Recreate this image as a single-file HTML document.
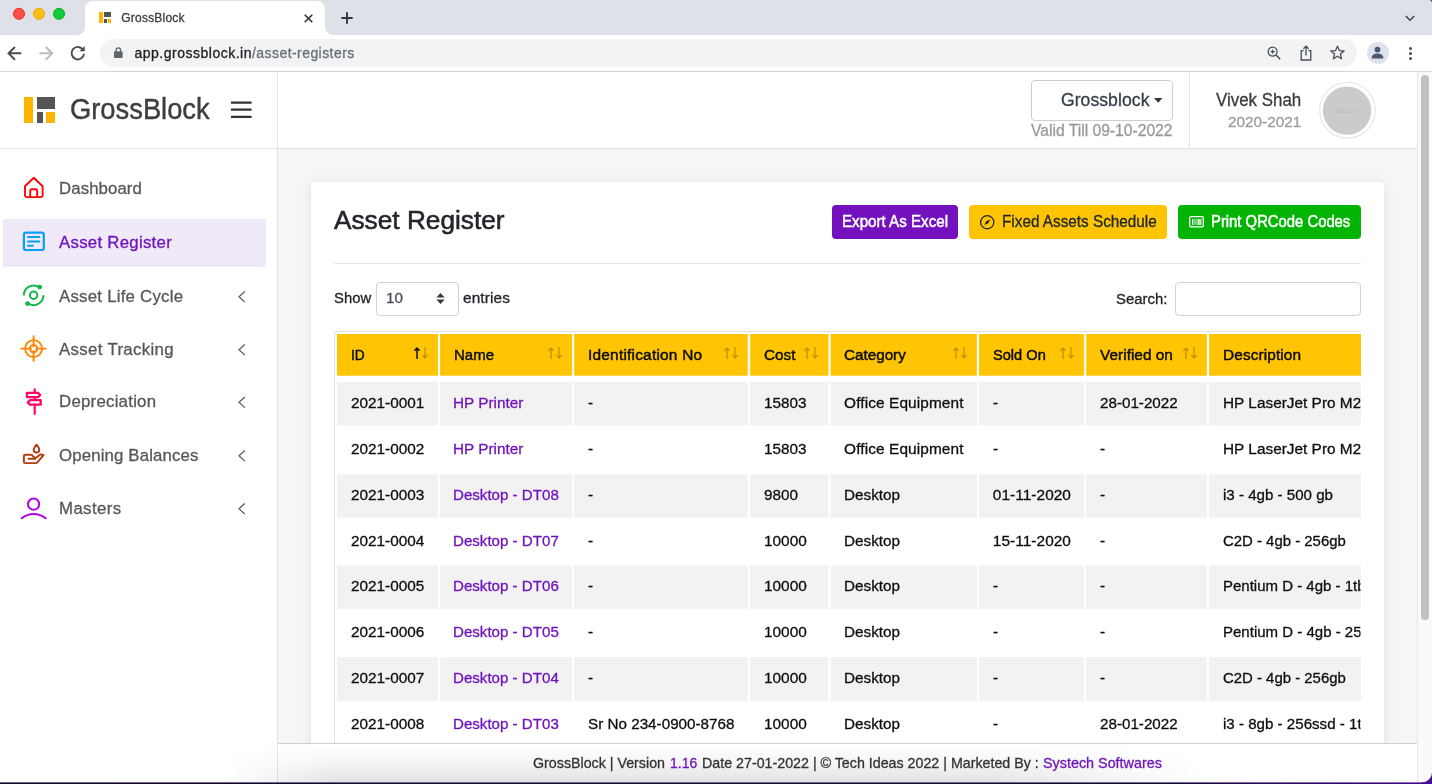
<!DOCTYPE html>
<html lang="en">
<head>
<meta charset="utf-8">
<title>GrossBlock</title>
<style>
html,body{margin:0;padding:0;}
body{width:1432px;height:784px;overflow:hidden;position:relative;background:#f6f6f6;font-family:"Liberation Sans",sans-serif;}
#root{position:absolute;left:0;top:0;width:1432px;height:784px;overflow:hidden;will-change:transform;}
.a{position:absolute;}
.t{position:absolute;white-space:nowrap;line-height:1;}
svg{position:absolute;overflow:visible;}
/* chrome */
#tabstrip{left:0;top:0;width:1432px;height:35px;background:#dfe1e8;}
#tab{left:85px;top:1px;width:240px;height:34px;background:#fff;border-radius:8px 8px 0 0;}
#toolbar{left:0;top:35px;width:1432px;height:36px;background:#fff;}
#chromeline{left:0;top:71px;width:1432px;height:1px;background:#d4d5d8;}
#omni{left:100px;top:39px;width:1257px;height:28px;border-radius:14px;background:#f1f3f4;}
.tl{width:12px;height:12px;border-radius:50%;top:8px;box-sizing:border-box;}
/* app */
#sidebar{left:0;top:72px;width:277px;height:712px;background:#fff;}
#sideline{left:277px;top:72px;width:1px;height:712px;background:#e4e4e4;}
#header{left:278px;top:72px;width:1139px;height:76px;background:#fff;}
#headline{left:0;top:148px;width:1417px;height:1px;background:#e4e4e4;}
#active{left:3px;top:219px;width:263px;height:47.5px;background:#f0e9f8;}
#card{left:311px;top:182px;width:1073px;height:640px;background:#fff;border-radius:4px;box-shadow:0 1px 13px rgba(0,0,0,.085);}
#footer{left:278px;top:743px;width:1139px;height:41px;background:#fff;border-top:1px solid #cfcfcf;box-sizing:border-box;}
#shade{left:225px;top:745px;width:980px;height:37px;background:linear-gradient(to bottom,rgba(0,0,0,0) 0,rgba(0,0,0,.03) 40%,rgba(0,0,0,.11) 100%);-webkit-mask-image:linear-gradient(to right,transparent 0,#000 11%,#000 78%,transparent 100%);mask-image:linear-gradient(to right,transparent 0,#000 11%,#000 78%,transparent 100%);}
#sbtrack{left:1417px;top:72px;width:15px;height:712px;background:#fafafa;border-left:1px solid #e8e8e8;box-sizing:border-box;}
#sbthumb{left:1421px;top:75px;width:8px;height:545px;border-radius:4px;background:#c1c1c1;}
.btn{border-radius:4px;top:205px;height:34px;}
.th{top:334px;height:42px;background:#ffc403;}
.td{background:#f2f2f2;height:43.6px;}
.box{border:1px solid #ced4da;border-radius:4px;box-sizing:border-box;background:#fff;}
</style>
</head>
<body>
<div id="root">
<!-- ===== browser chrome ===== -->
<div class="a" id="tabstrip"></div>
<div class="a" id="tab"></div>
<svg style="left:77px;top:27px" width="8" height="8"><path d="M8 0V8H0A8 8 0 0 0 8 0Z" fill="#fff"/></svg>
<svg style="left:325px;top:27px" width="8" height="8"><path d="M0 0V8H8A8 8 0 0 1 0 0Z" fill="#fff"/></svg>
<svg style="left:10px;top:5px" width="60" height="18" viewBox="10 5 60 18"><circle cx="19" cy="13.8" r="5.55" fill="#ff4f48" stroke="#ee2412" stroke-width=".9"/><circle cx="39" cy="13.8" r="5.55" fill="#ffbf12" stroke="#e5a000" stroke-width=".9"/><circle cx="59" cy="13.8" r="5.55" fill="#12cc3a" stroke="#00aa1c" stroke-width=".9"/></svg>
<div class="a" id="toolbar"></div>
<div class="a" id="chromeline"></div>
<div class="a" id="omni"></div>
<!-- favicon -->
<div class="a" style="left:98.8px;top:12.3px;width:4.1px;height:11.1px;background:#ffb400"></div>
<div class="a" style="left:104px;top:12.3px;width:7.4px;height:5.2px;background:#555"></div>
<div class="a" style="left:104px;top:18.6px;width:2.8px;height:4.8px;background:#555"></div>
<div class="a" style="left:108px;top:18.6px;width:3.4px;height:4.8px;background:#ffb400"></div>
<!-- tab close / new tab / chevron -->
<svg style="left:304px;top:13.5px" width="9" height="9" viewBox="0 0 9 9"><path d="M.7 .7L8.3 8.3M8.3 .7L.7 8.3" stroke="#33363a" stroke-width="1.6"/></svg>
<svg style="left:340.8px;top:12.1px" width="12" height="12" viewBox="0 0 12 12"><path d="M6 .3V11.7M.3 6H11.7" stroke="#33363a" stroke-width="1.9"/></svg>
<svg style="left:1405px;top:14.5px" width="10" height="7" viewBox="0 0 10 7"><path d="M.8 1L5 5.2L9.2 1" fill="none" stroke="#3c4043" stroke-width="1.5"/></svg>
<!-- back / forward / reload -->
<svg style="left:6.5px;top:45.7px" width="14.7" height="14.7" viewBox="0 0 14 14"><path d="M13.6 7H1.8M7.6 .9L1.5 7L7.6 13.1" fill="none" stroke="#4a4d51" stroke-width="1.9"/></svg>
<svg style="left:38.7px;top:45.7px" width="14.7" height="14.7" viewBox="0 0 14 14"><path d="M.4 7H12.2M6.4 .9L12.5 7L6.4 13.1" fill="none" stroke="#b9bbbe" stroke-width="1.9"/></svg>
<svg style="left:70.2px;top:44.8px" width="15.6" height="15.6" viewBox="0 0 15 15"><path d="M12.6 4.6A6 6 0 1 0 13.5 8.4" fill="none" stroke="#4a4d51" stroke-width="1.9"/><path d="M14.2 .9V6H9.1Z" fill="#4a4d51"/></svg>
<!-- lock -->
<svg style="left:113.8px;top:47px" width="8.6" height="11" viewBox="0 0 8.6 11"><rect x="0" y="4.2" width="8.6" height="6.8" rx="1" fill="#5f6368"/><path d="M2 4.6V3.2A2.3 2.3 0 0 1 6.6 3.2V4.6" fill="none" stroke="#5f6368" stroke-width="1.3"/></svg>
<!-- zoom -->
<svg style="left:1266.5px;top:45.5px" width="14" height="14" viewBox="0 0 14 14"><circle cx="5.6" cy="5.6" r="4.5" fill="none" stroke="#4a4d51" stroke-width="1.3"/><path d="M9 9L13.2 13.2" stroke="#4a4d51" stroke-width="1.5"/><path d="M5.6 3.4V7.8M3.4 5.6H7.8" stroke="#4a4d51" stroke-width="1.1"/></svg>
<!-- share -->
<svg style="left:1300px;top:44.5px" width="12" height="16" viewBox="0 0 12 16"><path d="M3.6 5.6H1.2V15H10.8V5.6H8.4" fill="none" stroke="#4a4d51" stroke-width="1.3"/><path d="M6 10.4V1.4M3.4 3.8L6 1.2L8.6 3.8" fill="none" stroke="#4a4d51" stroke-width="1.3"/></svg>
<!-- star -->
<svg style="left:1330px;top:45px" width="15" height="15" viewBox="0 0 15 15"><path d="M7.5 1.2L9.4 5.6L14.1 6L10.5 9.1L11.6 13.8L7.5 11.3L3.4 13.8L4.5 9.1L.9 6L5.6 5.6Z" fill="none" stroke="#4a4d51" stroke-width="1.3" stroke-linejoin="round"/></svg>
<!-- profile -->
<div class="a" style="left:1366.5px;top:42px;width:22px;height:22px;border-radius:50%;background:#dfe2e9"></div>
<svg style="left:1371px;top:46px" width="13" height="13" viewBox="0 0 13 13"><circle cx="6.5" cy="3.6" r="2.9" fill="#4c5871"/><path d="M.6 12.6C.6 8.6 3.6 7.6 6.5 7.6S12.4 8.6 12.4 12.6Z" fill="#4c5871"/></svg>
<!-- menu dots -->
<svg style="left:1408.5px;top:47px" width="3" height="14" viewBox="0 0 3 14"><circle cx="1.5" cy="1.6" r="1.5" fill="#4a4d51"/><circle cx="1.5" cy="6.5" r="1.5" fill="#4a4d51"/><circle cx="1.5" cy="11.4" r="1.5" fill="#4a4d51"/></svg>

<!-- ===== app ===== -->
<div class="a" id="header"></div>
<div class="a" id="sidebar"></div>
<div class="a" id="sideline"></div>
<div class="a" id="active"></div>
<div class="a" id="card"></div>
<div class="a btn" style="left:832px;width:125.6px;background:#7211bd"></div>
<div class="a btn" style="left:968.7px;width:197.9px;background:#ffc403"></div>
<div class="a btn" style="left:1178.1px;width:182.9px;background:#04b404"></div>
<svg style="left:980px;top:215.1px" width="14.5" height="14.5" viewBox="0 0 14.5 14.5"><circle cx="7.25" cy="7.25" r="6.6" fill="none" stroke="#1d2530" stroke-width="1.25"/><path d="M10.1 4.4L8.3 8.3L4.4 10.1L6.2 6.2Z" fill="#1d2530"/></svg>
<svg style="left:1189px;top:216.2px" width="15" height="11.6" viewBox="0 0 15 11.6"><rect x=".65" y=".65" width="13.7" height="10.3" rx="1.4" fill="none" stroke="#fff" stroke-width="1.3"/><path d="M3.6 2.9V8.9M10.9 2.9V8.9" stroke="#fff" stroke-width="1.2"/><path d="M5.1 2.9V8.9M6.3 2.9V8.9" stroke="#fff" stroke-width=".7" opacity=".8"/><path d="M7.9 2.9V8.9" stroke="#fff" stroke-width="1" opacity=".7"/><path d="M9.4 2.9V8.9" stroke="#fff" stroke-width="1.1"/><path d="M12 2.9V8.9" stroke="#fff" stroke-width=".8"/></svg>
<div class="a" style="left:334px;top:263px;width:1027px;height:1px;background:#e6e6e6"></div>
<div class="a box" style="left:376px;top:282px;width:82.5px;height:33.6px"></div>
<svg style="left:436px;top:293px" width="9" height="11" viewBox="0 0 9 11"><path d="M4.5 0L8.6 4.4H.4Z M4.5 11L8.6 6.6H.4Z" fill="#343a40"/></svg>
<div class="a box" style="left:1175px;top:282px;width:186px;height:33.6px"></div>
<div class="a" style="left:334px;top:331px;width:1027px;height:1px;background:#dee2e6"></div>
<div class="a" style="left:334px;top:331px;width:1px;height:420px;background:#dee2e6"></div>
<svg style="left:0;top:0" width="1361" height="784" viewBox="0 0 1361 784"><rect x="337" y="334" width="101.0" height="41.7" fill="#ffc403"/><rect x="440.1" y="334" width="131.9" height="41.7" fill="#ffc403"/><rect x="574.2" y="334" width="173.5" height="41.7" fill="#ffc403"/><rect x="750.2" y="334" width="78.2" height="41.7" fill="#ffc403"/><rect x="830.7" y="334" width="146.1" height="41.7" fill="#ffc403"/><rect x="979.1" y="334" width="104.8" height="41.7" fill="#ffc403"/><rect x="1086.2" y="334" width="120.6" height="41.7" fill="#ffc403"/><rect x="1209.1" y="334" width="151.9" height="41.7" fill="#ffc403"/><rect x="337" y="382.00" width="101.0" height="43.5" fill="#f2f2f2"/><rect x="440.1" y="382.00" width="131.9" height="43.5" fill="#f2f2f2"/><rect x="574.2" y="382.00" width="173.5" height="43.5" fill="#f2f2f2"/><rect x="750.2" y="382.00" width="78.2" height="43.5" fill="#f2f2f2"/><rect x="830.7" y="382.00" width="146.1" height="43.5" fill="#f2f2f2"/><rect x="979.1" y="382.00" width="104.8" height="43.5" fill="#f2f2f2"/><rect x="1086.2" y="382.00" width="120.6" height="43.5" fill="#f2f2f2"/><rect x="1209.1" y="382.00" width="151.9" height="43.5" fill="#f2f2f2"/><rect x="337" y="474.20" width="101.0" height="43.6" fill="#f2f2f2"/><rect x="440.1" y="474.20" width="131.9" height="43.6" fill="#f2f2f2"/><rect x="574.2" y="474.20" width="173.5" height="43.6" fill="#f2f2f2"/><rect x="750.2" y="474.20" width="78.2" height="43.6" fill="#f2f2f2"/><rect x="830.7" y="474.20" width="146.1" height="43.6" fill="#f2f2f2"/><rect x="979.1" y="474.20" width="104.8" height="43.6" fill="#f2f2f2"/><rect x="1086.2" y="474.20" width="120.6" height="43.6" fill="#f2f2f2"/><rect x="1209.1" y="474.20" width="151.9" height="43.6" fill="#f2f2f2"/><rect x="337" y="565.20" width="101.0" height="43.6" fill="#f2f2f2"/><rect x="440.1" y="565.20" width="131.9" height="43.6" fill="#f2f2f2"/><rect x="574.2" y="565.20" width="173.5" height="43.6" fill="#f2f2f2"/><rect x="750.2" y="565.20" width="78.2" height="43.6" fill="#f2f2f2"/><rect x="830.7" y="565.20" width="146.1" height="43.6" fill="#f2f2f2"/><rect x="979.1" y="565.20" width="104.8" height="43.6" fill="#f2f2f2"/><rect x="1086.2" y="565.20" width="120.6" height="43.6" fill="#f2f2f2"/><rect x="1209.1" y="565.20" width="151.9" height="43.6" fill="#f2f2f2"/><rect x="337" y="657.20" width="101.0" height="43.6" fill="#f2f2f2"/><rect x="440.1" y="657.20" width="131.9" height="43.6" fill="#f2f2f2"/><rect x="574.2" y="657.20" width="173.5" height="43.6" fill="#f2f2f2"/><rect x="750.2" y="657.20" width="78.2" height="43.6" fill="#f2f2f2"/><rect x="830.7" y="657.20" width="146.1" height="43.6" fill="#f2f2f2"/><rect x="979.1" y="657.20" width="104.8" height="43.6" fill="#f2f2f2"/><rect x="1086.2" y="657.20" width="120.6" height="43.6" fill="#f2f2f2"/><rect x="1209.1" y="657.20" width="151.9" height="43.6" fill="#f2f2f2"/></svg>
<svg style="left:413.9px;top:347px" width="15" height="12" viewBox="0 0 15 12"><path d="M3 12V1.2M.4 3.8L3 1L5.6 3.8" fill="none" stroke="#111" stroke-width="1.5"/><path d="M11 0V10.8M8.4 8.2L11 11L13.6 8.2" fill="none" stroke="#b8890a" stroke-width="1.1"/></svg>
<svg style="left:547.9px;top:347px" width="15" height="12" viewBox="0 0 15 12"><path d="M3 12V1.2M.4 3.8L3 1L5.6 3.8" fill="none" stroke="#b8890a" stroke-width="1.1"/><path d="M11 0V10.8M8.4 8.2L11 11L13.6 8.2" fill="none" stroke="#b8890a" stroke-width="1.1"/></svg>
<svg style="left:723.6px;top:347px" width="15" height="12" viewBox="0 0 15 12"><path d="M3 12V1.2M.4 3.8L3 1L5.6 3.8" fill="none" stroke="#b8890a" stroke-width="1.1"/><path d="M11 0V10.8M8.4 8.2L11 11L13.6 8.2" fill="none" stroke="#b8890a" stroke-width="1.1"/></svg>
<svg style="left:804.3px;top:347px" width="15" height="12" viewBox="0 0 15 12"><path d="M3 12V1.2M.4 3.8L3 1L5.6 3.8" fill="none" stroke="#b8890a" stroke-width="1.1"/><path d="M11 0V10.8M8.4 8.2L11 11L13.6 8.2" fill="none" stroke="#b8890a" stroke-width="1.1"/></svg>
<svg style="left:952.7px;top:347px" width="15" height="12" viewBox="0 0 15 12"><path d="M3 12V1.2M.4 3.8L3 1L5.6 3.8" fill="none" stroke="#b8890a" stroke-width="1.1"/><path d="M11 0V10.8M8.4 8.2L11 11L13.6 8.2" fill="none" stroke="#b8890a" stroke-width="1.1"/></svg>
<svg style="left:1059.8px;top:347px" width="15" height="12" viewBox="0 0 15 12"><path d="M3 12V1.2M.4 3.8L3 1L5.6 3.8" fill="none" stroke="#b8890a" stroke-width="1.1"/><path d="M11 0V10.8M8.4 8.2L11 11L13.6 8.2" fill="none" stroke="#b8890a" stroke-width="1.1"/></svg>
<svg style="left:1182.7px;top:347px" width="15" height="12" viewBox="0 0 15 12"><path d="M3 12V1.2M.4 3.8L3 1L5.6 3.8" fill="none" stroke="#b8890a" stroke-width="1.1"/><path d="M11 0V10.8M8.4 8.2L11 11L13.6 8.2" fill="none" stroke="#b8890a" stroke-width="1.1"/></svg>

<div class="a" id="footer"></div>
<div class="a" id="shade"></div>
<div class="a" id="headline"></div>
<!-- logo -->
<div class="a" style="left:24.3px;top:96.7px;width:8.7px;height:26.3px;background:#ffb400"></div>
<div class="a" style="left:36.5px;top:96.7px;width:18.2px;height:12.2px;background:#555"></div>
<div class="a" style="left:36.5px;top:111.5px;width:6.5px;height:11.5px;background:#555"></div>
<div class="a" style="left:46.2px;top:111.5px;width:8.5px;height:11.5px;background:#ffb400"></div>
<!-- hamburger -->
<svg style="left:231px;top:100px" width="21" height="19" viewBox="0 0 21 19"><path d="M0 2.6H20.6M0 9.7H20.6M0 16.8H20.6" stroke="#333" stroke-width="2.3"/></svg>
<!-- company dropdown -->
<div class="a" style="left:1031px;top:80px;width:141.5px;height:40.5px;border:1px solid #c6cfdc;border-radius:4px;box-sizing:border-box;background:#fff"></div>
<svg style="left:1154.3px;top:98px" width="8.4" height="5" viewBox="0 0 8.4 5"><path d="M0 0H8.4L4.2 4.7Z" fill="#2d3742"/></svg>
<div class="a" style="left:1189px;top:72px;width:1px;height:76px;background:#e4e4e4"></div>
<!-- avatar -->
<svg style="left:1310px;top:76px" width="76" height="70" viewBox="1310 76 76 70"><circle cx="1347.5" cy="110.3" r="27.8" fill="#fff" stroke="#e7e7e7" stroke-width="1.2"/><circle cx="1347.1" cy="110.6" r="24.2" fill="#cbcbcb"/></svg>

<svg style="left:0;top:150px" width="277" height="400" viewBox="0 150 277 400" fill="none" stroke-linecap="round" stroke-linejoin="round">
<!-- dashboard (home) -->
<g stroke="#ff0505" stroke-width="1.9">
<path d="M25 186.3L33.8 177.8L42.6 186.3V195.6A1.5 1.5 0 0 1 41.1 197.1H26.5A1.5 1.5 0 0 1 25 195.6Z"/>
<path d="M30.2 196.8V190.8A1.5 1.5 0 0 1 31.7 189.3H35.7A1.5 1.5 0 0 1 37.2 190.8V196.8"/>
</g>
<!-- asset register -->
<g stroke="#06a0fb">
<rect x="23.9" y="232.6" width="19.9" height="17.4" rx="2" stroke-width="2.2"/>
<path d="M28 237H39.2M28 241.4H39.2M28 245.8H32.9" stroke-width="2"/>
</g>
<!-- asset life cycle -->
<g stroke="#10b646" stroke-width="2">
<circle cx="33.6" cy="295.3" r="3.7"/>
<path d="M23.9 294.6A9.8 9.8 0 0 1 39.4 287.4"/>
<path d="M43.4 296A9.8 9.8 0 0 1 27.9 303.3"/>
<circle cx="39.7" cy="287.1" r="2.4" fill="#10b646" stroke="none"/>
<circle cx="27.6" cy="303.6" r="2.4" fill="#10b646" stroke="none"/>
</g>
<!-- asset tracking -->
<g stroke="#ff8600" stroke-width="1.9">
<circle cx="33.6" cy="348.6" r="8.5"/>
<circle cx="33.6" cy="348.6" r="3.7"/>
<path d="M33.6 336.3V346.2M33.6 351V360.9M21.3 348.6H31.2M36 348.6H45.9"/>
</g>
<!-- depreciation (signpost) -->
<g stroke="#ff0568" stroke-width="2.3">
<path d="M34.7 389.3V392.6M34.7 397.4V400M34.7 404.8V413.8" stroke-width="2.2"/>
<path d="M27 392.8H38L40.1 395L38 397.2H27Z"/>
<path d="M40.7 400.2H29.9L27.8 402.4L29.9 404.7H40.7Z"/>
</g>
<!-- opening balances (hand + drop) -->
<g stroke="#b23c0e" stroke-width="1.9">
<path d="M36.5 444.7C38.2 446.7 39.3 448.4 39.3 449.7A2.8 2.8 0 0 1 33.7 449.7C33.7 448.4 34.8 446.7 36.5 444.7Z"/>
<path d="M25.1 454.7H30.4C32.6 454.7 33.5 456.6 35.1 458.5L39.6 454.9C40.6 454.2 41.6 454.2 43.6 455.2L37.3 462.4C36.9 462.9 36.4 463.1 35.8 463.1H25.1A1.2 1.2 0 0 1 23.9 461.9V455.9A1.2 1.2 0 0 1 25.1 454.7Z"/>
<path d="M28.6 458.8H35"/>
</g>
<!-- masters (user) -->
<g stroke="#b000f0" stroke-width="2">
<circle cx="33.6" cy="504.2" r="5.6"/>
<path d="M21.8 518.3A18.6 18.6 0 0 1 45.6 518.3"/>
</g>
<!-- chevrons -->
<g stroke="#555" stroke-width="1.2" stroke-linecap="butt" stroke-linejoin="miter">
<path d="M244.8 291.5L239 296.8L244.8 302.1"/>
<path d="M244.8 344.5L239 349.8L244.8 355.1"/>
<path d="M244.8 397L239 402.3L244.8 407.6"/>
<path d="M244.8 450.5L239 455.8L244.8 461.1"/>
<path d="M244.8 503.5L239 508.8L244.8 514.1"/>
</g>
</svg>

<div class="a" id="sbtrack"></div>
<div class="a" id="sbthumb"></div>
<span class="t" style="left:121.30px;top:12.00px;font-size:12px;color:#3c4043;letter-spacing:0.214px;-webkit-text-stroke:0.3px #3c4043;">GrossBlock</span>
<span class="t" style="left:134.50px;top:45.80px;font-size:14px;color:#202124;letter-spacing:0.503px;-webkit-text-stroke:0.3px #202124;">app.grossblock.in</span>
<span class="t" style="left:252.00px;top:45.80px;font-size:14px;color:#6b6f74;letter-spacing:0.437px;-webkit-text-stroke:0.3px #6b6f74;">/asset-registers</span>
<span class="t" style="left:69.90px;top:95.00px;font-size:29.2px;color:#3d3d3d;transform:scaleX(0.9362);transform-origin:0 0;-webkit-text-stroke:0.4px #3d3d3d;">GrossBlock</span>
<span class="t" style="left:59.00px;top:181.00px;font-size:16.8px;color:#585858;letter-spacing:0.099px;-webkit-text-stroke:0.3px #585858;">Dashboard</span>
<span class="t" style="left:59.00px;top:235.00px;font-size:16.8px;color:#7014bd;letter-spacing:0.277px;-webkit-text-stroke:0.3px #7014bd;">Asset Register</span>
<span class="t" style="left:59.00px;top:289.00px;font-size:16.8px;color:#585858;letter-spacing:0.249px;-webkit-text-stroke:0.3px #585858;">Asset Life Cycle</span>
<span class="t" style="left:59.00px;top:342.00px;font-size:16.8px;color:#585858;letter-spacing:0.353px;-webkit-text-stroke:0.3px #585858;">Asset Tracking</span>
<span class="t" style="left:59.00px;top:394.00px;font-size:16.8px;color:#585858;letter-spacing:0.257px;-webkit-text-stroke:0.3px #585858;">Depreciation</span>
<span class="t" style="left:59.00px;top:448.00px;font-size:16.8px;color:#585858;letter-spacing:0.153px;-webkit-text-stroke:0.3px #585858;">Opening Balances</span>
<span class="t" style="left:59.00px;top:501.00px;font-size:16.8px;color:#585858;letter-spacing:0.402px;-webkit-text-stroke:0.3px #585858;">Masters</span>
<span class="t" style="left:1060.90px;top:92.00px;font-size:17.6px;color:#323e4c;letter-spacing:0.060px;-webkit-text-stroke:0.3px #323e4c;">Grossblock</span>
<span class="t" style="left:1031.00px;top:123.00px;font-size:15.7px;color:#999;transform:scaleX(0.9975);transform-origin:0 0;-webkit-text-stroke:0.3px #999;">Valid Till 09-10-2022</span>
<span class="t" style="left:1216.20px;top:92.00px;font-size:17.6px;color:#3a3a3a;transform:scaleX(0.9607);transform-origin:0 0;-webkit-text-stroke:0.3px #3a3a3a;">Vivek Shah</span>
<span class="t" style="left:1227.70px;top:114.00px;font-size:15.4px;color:#9b9b9b;transform:scaleX(0.9958);transform-origin:0 0;-webkit-text-stroke:0.3px #9b9b9b;">2020-2021</span>
<span class="t" style="left:1337.20px;top:108.70px;font-size:5.2px;color:#b4b4b4;transform:scaleX(0.8312);transform-origin:0 0;">110 x 110</span>
<span class="t" style="left:334.40px;top:207.40px;font-size:26.6px;color:#212529;transform:scaleX(0.9865);transform-origin:0 0;-webkit-text-stroke:0.55px #212529;">Asset Register</span>
<span class="t" style="left:841.70px;top:213.00px;font-size:16.5px;color:#fff;transform:scaleX(0.9173);transform-origin:0 0;-webkit-text-stroke:0.5px #fff;">Export As Excel</span>
<span class="t" style="left:1001.60px;top:213.00px;font-size:16.5px;color:#1d2530;transform:scaleX(0.9267);transform-origin:0 0;-webkit-text-stroke:0.3px #1d2530;">Fixed Assets Schedule</span>
<span class="t" style="left:1211.00px;top:213.00px;font-size:16.5px;color:#fff;transform:scaleX(0.8987);transform-origin:0 0;-webkit-text-stroke:0.5px #fff;">Print QRCode Codes</span>
<span class="t" style="left:334.40px;top:290.00px;font-size:15.4px;color:#212529;transform:scaleX(0.9662);transform-origin:0 0;-webkit-text-stroke:0.3px #212529;">Show</span>
<span class="t" style="left:386.00px;top:290.00px;font-size:15.4px;color:#495057;transform:scaleX(0.9869);transform-origin:0 0;-webkit-text-stroke:0.3px #495057;">10</span>
<span class="t" style="left:463.00px;top:290.00px;font-size:15.4px;color:#212529;letter-spacing:0.114px;-webkit-text-stroke:0.3px #212529;">entries</span>
<span class="t" style="left:1115.70px;top:291.00px;font-size:15.4px;color:#212529;transform:scaleX(0.9671);transform-origin:0 0;-webkit-text-stroke:0.3px #212529;">Search:</span>
<span class="t" style="left:350.90px;top:347.00px;font-size:15.4px;color:#0c0c0c;transform:scaleX(0.8892);transform-origin:0 0;-webkit-text-stroke:0.45px #0c0c0c;">ID</span>
<span class="t" style="left:453.60px;top:347.00px;font-size:15.4px;color:#0c0c0c;transform:scaleX(0.9741);transform-origin:0 0;-webkit-text-stroke:0.45px #0c0c0c;">Name</span>
<span class="t" style="left:588.00px;top:347.00px;font-size:15.4px;color:#0c0c0c;letter-spacing:0.231px;-webkit-text-stroke:0.45px #0c0c0c;">Identification No</span>
<span class="t" style="left:763.90px;top:347.00px;font-size:15.4px;color:#0c0c0c;transform:scaleX(0.9919);transform-origin:0 0;-webkit-text-stroke:0.45px #0c0c0c;">Cost</span>
<span class="t" style="left:844.10px;top:347.00px;font-size:15.4px;color:#0c0c0c;transform:scaleX(0.9895);transform-origin:0 0;-webkit-text-stroke:0.45px #0c0c0c;">Category</span>
<span class="t" style="left:993.00px;top:347.00px;font-size:15.4px;color:#0c0c0c;transform:scaleX(0.9492);transform-origin:0 0;-webkit-text-stroke:0.45px #0c0c0c;">Sold On</span>
<span class="t" style="left:1100.10px;top:347.00px;font-size:15.4px;color:#0c0c0c;letter-spacing:0.006px;-webkit-text-stroke:0.45px #0c0c0c;">Verified on</span>
<span class="t" style="left:1223.00px;top:347.00px;font-size:15.4px;color:#0c0c0c;letter-spacing:0.101px;-webkit-text-stroke:0.45px #0c0c0c;">Description</span>
<span class="t" style="left:350.90px;top:395.00px;font-size:15.4px;color:#0e0e0e;transform:scaleX(0.9958);transform-origin:0 0;-webkit-text-stroke:0.3px #0e0e0e;">2021-0001</span>
<span class="t" style="left:453.10px;top:395.00px;font-size:15.4px;color:#7014bd;transform:scaleX(0.9941);transform-origin:0 0;-webkit-text-stroke:0.3px #7014bd;">HP Printer</span>
<span class="t" style="left:587.60px;top:395.00px;font-size:15.4px;color:#0e0e0e;transform:scaleX(0.9921);transform-origin:0 0;-webkit-text-stroke:0.3px #0e0e0e;">-</span>
<span class="t" style="left:763.90px;top:395.00px;font-size:15.4px;color:#0e0e0e;transform:scaleX(0.9927);transform-origin:0 0;-webkit-text-stroke:0.3px #0e0e0e;">15803</span>
<span class="t" style="left:844.10px;top:395.00px;font-size:15.4px;color:#0e0e0e;letter-spacing:0.107px;-webkit-text-stroke:0.3px #0e0e0e;">Office Equipment</span>
<span class="t" style="left:992.80px;top:395.00px;font-size:15.4px;color:#0e0e0e;transform:scaleX(0.9921);transform-origin:0 0;-webkit-text-stroke:0.3px #0e0e0e;">-</span>
<span class="t" style="left:1100.10px;top:395.00px;font-size:15.4px;color:#0e0e0e;transform:scaleX(0.9869);transform-origin:0 0;-webkit-text-stroke:0.3px #0e0e0e;">28-01-2022</span>
<span class="t" style="left:1223.40px;top:395.00px;font-size:15.4px;color:#0e0e0e;transform:scaleX(0.9993);transform-origin:0 0;-webkit-text-stroke:0.3px #0e0e0e;clip-path:inset(-6px calc(100% - 137.7px) -6px 0);">HP LaserJet Pro M203dn</span>
<span class="t" style="left:350.90px;top:441.00px;font-size:15.4px;color:#0e0e0e;transform:scaleX(0.9958);transform-origin:0 0;-webkit-text-stroke:0.3px #0e0e0e;">2021-0002</span>
<span class="t" style="left:453.10px;top:441.00px;font-size:15.4px;color:#7014bd;transform:scaleX(0.9941);transform-origin:0 0;-webkit-text-stroke:0.3px #7014bd;">HP Printer</span>
<span class="t" style="left:587.60px;top:441.00px;font-size:15.4px;color:#0e0e0e;transform:scaleX(0.9921);transform-origin:0 0;-webkit-text-stroke:0.3px #0e0e0e;">-</span>
<span class="t" style="left:763.90px;top:441.00px;font-size:15.4px;color:#0e0e0e;transform:scaleX(0.9927);transform-origin:0 0;-webkit-text-stroke:0.3px #0e0e0e;">15803</span>
<span class="t" style="left:844.10px;top:441.00px;font-size:15.4px;color:#0e0e0e;letter-spacing:0.107px;-webkit-text-stroke:0.3px #0e0e0e;">Office Equipment</span>
<span class="t" style="left:992.80px;top:441.00px;font-size:15.4px;color:#0e0e0e;transform:scaleX(0.9921);transform-origin:0 0;-webkit-text-stroke:0.3px #0e0e0e;">-</span>
<span class="t" style="left:1100.10px;top:441.00px;font-size:15.4px;color:#0e0e0e;transform:scaleX(0.9921);transform-origin:0 0;-webkit-text-stroke:0.3px #0e0e0e;">-</span>
<span class="t" style="left:1223.40px;top:441.00px;font-size:15.4px;color:#0e0e0e;transform:scaleX(0.9993);transform-origin:0 0;-webkit-text-stroke:0.3px #0e0e0e;clip-path:inset(-6px calc(100% - 137.7px) -6px 0);">HP LaserJet Pro M203dn</span>
<span class="t" style="left:350.90px;top:487.00px;font-size:15.4px;color:#0e0e0e;transform:scaleX(0.9958);transform-origin:0 0;-webkit-text-stroke:0.3px #0e0e0e;">2021-0003</span>
<span class="t" style="left:453.10px;top:487.00px;font-size:15.4px;color:#7014bd;transform:scaleX(0.9816);transform-origin:0 0;-webkit-text-stroke:0.3px #7014bd;">Desktop - DT08</span>
<span class="t" style="left:587.60px;top:487.00px;font-size:15.4px;color:#0e0e0e;transform:scaleX(0.9921);transform-origin:0 0;-webkit-text-stroke:0.3px #0e0e0e;">-</span>
<span class="t" style="left:763.90px;top:487.00px;font-size:15.4px;color:#0e0e0e;transform:scaleX(0.9927);transform-origin:0 0;-webkit-text-stroke:0.3px #0e0e0e;">9800</span>
<span class="t" style="left:844.10px;top:487.00px;font-size:15.4px;color:#0e0e0e;transform:scaleX(0.9935);transform-origin:0 0;-webkit-text-stroke:0.3px #0e0e0e;">Desktop</span>
<span class="t" style="left:992.80px;top:487.00px;font-size:15.4px;color:#0e0e0e;letter-spacing:0.061px;-webkit-text-stroke:0.3px #0e0e0e;">01-11-2020</span>
<span class="t" style="left:1100.10px;top:487.00px;font-size:15.4px;color:#0e0e0e;transform:scaleX(0.9921);transform-origin:0 0;-webkit-text-stroke:0.3px #0e0e0e;">-</span>
<span class="t" style="left:1223.40px;top:487.00px;font-size:15.4px;color:#0e0e0e;transform:scaleX(0.9813);transform-origin:0 0;-webkit-text-stroke:0.3px #0e0e0e;clip-path:inset(-6px calc(100% - 140.2px) -6px 0);">i3 - 4gb - 500 gb</span>
<span class="t" style="left:350.90px;top:533.00px;font-size:15.4px;color:#0e0e0e;transform:scaleX(0.9958);transform-origin:0 0;-webkit-text-stroke:0.3px #0e0e0e;">2021-0004</span>
<span class="t" style="left:453.10px;top:533.00px;font-size:15.4px;color:#7014bd;transform:scaleX(0.9816);transform-origin:0 0;-webkit-text-stroke:0.3px #7014bd;">Desktop - DT07</span>
<span class="t" style="left:587.60px;top:533.00px;font-size:15.4px;color:#0e0e0e;transform:scaleX(0.9921);transform-origin:0 0;-webkit-text-stroke:0.3px #0e0e0e;">-</span>
<span class="t" style="left:763.90px;top:533.00px;font-size:15.4px;color:#0e0e0e;letter-spacing:0.037px;-webkit-text-stroke:0.3px #0e0e0e;">10000</span>
<span class="t" style="left:844.10px;top:533.00px;font-size:15.4px;color:#0e0e0e;transform:scaleX(0.9935);transform-origin:0 0;-webkit-text-stroke:0.3px #0e0e0e;">Desktop</span>
<span class="t" style="left:992.80px;top:533.00px;font-size:15.4px;color:#0e0e0e;letter-spacing:0.061px;-webkit-text-stroke:0.3px #0e0e0e;">15-11-2020</span>
<span class="t" style="left:1100.10px;top:533.00px;font-size:15.4px;color:#0e0e0e;transform:scaleX(0.9921);transform-origin:0 0;-webkit-text-stroke:0.3px #0e0e0e;">-</span>
<span class="t" style="left:1223.40px;top:533.00px;font-size:15.4px;color:#0e0e0e;transform:scaleX(0.9698);transform-origin:0 0;-webkit-text-stroke:0.3px #0e0e0e;clip-path:inset(-6px calc(100% - 141.9px) -6px 0);">C2D - 4gb - 256gb</span>
<span class="t" style="left:350.90px;top:578.00px;font-size:15.4px;color:#0e0e0e;transform:scaleX(0.9958);transform-origin:0 0;-webkit-text-stroke:0.3px #0e0e0e;">2021-0005</span>
<span class="t" style="left:453.10px;top:578.00px;font-size:15.4px;color:#7014bd;transform:scaleX(0.9816);transform-origin:0 0;-webkit-text-stroke:0.3px #7014bd;">Desktop - DT06</span>
<span class="t" style="left:587.60px;top:578.00px;font-size:15.4px;color:#0e0e0e;transform:scaleX(0.9921);transform-origin:0 0;-webkit-text-stroke:0.3px #0e0e0e;">-</span>
<span class="t" style="left:763.90px;top:578.00px;font-size:15.4px;color:#0e0e0e;letter-spacing:0.037px;-webkit-text-stroke:0.3px #0e0e0e;">10000</span>
<span class="t" style="left:844.10px;top:578.00px;font-size:15.4px;color:#0e0e0e;transform:scaleX(0.9935);transform-origin:0 0;-webkit-text-stroke:0.3px #0e0e0e;">Desktop</span>
<span class="t" style="left:992.80px;top:578.00px;font-size:15.4px;color:#0e0e0e;transform:scaleX(0.9921);transform-origin:0 0;-webkit-text-stroke:0.3px #0e0e0e;">-</span>
<span class="t" style="left:1100.10px;top:578.00px;font-size:15.4px;color:#0e0e0e;transform:scaleX(0.9921);transform-origin:0 0;-webkit-text-stroke:0.3px #0e0e0e;">-</span>
<span class="t" style="left:1223.40px;top:578.00px;font-size:15.4px;color:#0e0e0e;transform:scaleX(0.9743);transform-origin:0 0;-webkit-text-stroke:0.3px #0e0e0e;clip-path:inset(-6px calc(100% - 141.2px) -6px 0);">Pentium D - 4gb - 1tb</span>
<span class="t" style="left:350.90px;top:624.00px;font-size:15.4px;color:#0e0e0e;transform:scaleX(0.9958);transform-origin:0 0;-webkit-text-stroke:0.3px #0e0e0e;">2021-0006</span>
<span class="t" style="left:453.10px;top:624.00px;font-size:15.4px;color:#7014bd;transform:scaleX(0.9816);transform-origin:0 0;-webkit-text-stroke:0.3px #7014bd;">Desktop - DT05</span>
<span class="t" style="left:587.60px;top:624.00px;font-size:15.4px;color:#0e0e0e;transform:scaleX(0.9921);transform-origin:0 0;-webkit-text-stroke:0.3px #0e0e0e;">-</span>
<span class="t" style="left:763.90px;top:624.00px;font-size:15.4px;color:#0e0e0e;letter-spacing:0.037px;-webkit-text-stroke:0.3px #0e0e0e;">10000</span>
<span class="t" style="left:844.10px;top:624.00px;font-size:15.4px;color:#0e0e0e;transform:scaleX(0.9935);transform-origin:0 0;-webkit-text-stroke:0.3px #0e0e0e;">Desktop</span>
<span class="t" style="left:992.80px;top:624.00px;font-size:15.4px;color:#0e0e0e;transform:scaleX(0.9921);transform-origin:0 0;-webkit-text-stroke:0.3px #0e0e0e;">-</span>
<span class="t" style="left:1100.10px;top:624.00px;font-size:15.4px;color:#0e0e0e;transform:scaleX(0.9921);transform-origin:0 0;-webkit-text-stroke:0.3px #0e0e0e;">-</span>
<span class="t" style="left:1223.40px;top:624.00px;font-size:15.4px;color:#0e0e0e;transform:scaleX(0.9759);transform-origin:0 0;-webkit-text-stroke:0.3px #0e0e0e;clip-path:inset(-6px calc(100% - 141.0px) -6px 0);">Pentium D - 4gb - 256gb</span>
<span class="t" style="left:350.90px;top:670.00px;font-size:15.4px;color:#0e0e0e;transform:scaleX(0.9958);transform-origin:0 0;-webkit-text-stroke:0.3px #0e0e0e;">2021-0007</span>
<span class="t" style="left:453.10px;top:670.00px;font-size:15.4px;color:#7014bd;transform:scaleX(0.9816);transform-origin:0 0;-webkit-text-stroke:0.3px #7014bd;">Desktop - DT04</span>
<span class="t" style="left:587.60px;top:670.00px;font-size:15.4px;color:#0e0e0e;transform:scaleX(0.9921);transform-origin:0 0;-webkit-text-stroke:0.3px #0e0e0e;">-</span>
<span class="t" style="left:763.90px;top:670.00px;font-size:15.4px;color:#0e0e0e;letter-spacing:0.037px;-webkit-text-stroke:0.3px #0e0e0e;">10000</span>
<span class="t" style="left:844.10px;top:670.00px;font-size:15.4px;color:#0e0e0e;transform:scaleX(0.9935);transform-origin:0 0;-webkit-text-stroke:0.3px #0e0e0e;">Desktop</span>
<span class="t" style="left:992.80px;top:670.00px;font-size:15.4px;color:#0e0e0e;transform:scaleX(0.9921);transform-origin:0 0;-webkit-text-stroke:0.3px #0e0e0e;">-</span>
<span class="t" style="left:1100.10px;top:670.00px;font-size:15.4px;color:#0e0e0e;transform:scaleX(0.9921);transform-origin:0 0;-webkit-text-stroke:0.3px #0e0e0e;">-</span>
<span class="t" style="left:1223.40px;top:670.00px;font-size:15.4px;color:#0e0e0e;transform:scaleX(0.9698);transform-origin:0 0;-webkit-text-stroke:0.3px #0e0e0e;clip-path:inset(-6px calc(100% - 141.9px) -6px 0);">C2D - 4gb - 256gb</span>
<span class="t" style="left:350.90px;top:716.00px;font-size:15.4px;color:#0e0e0e;transform:scaleX(0.9958);transform-origin:0 0;-webkit-text-stroke:0.3px #0e0e0e;">2021-0008</span>
<span class="t" style="left:453.10px;top:716.00px;font-size:15.4px;color:#7014bd;transform:scaleX(0.9816);transform-origin:0 0;-webkit-text-stroke:0.3px #7014bd;">Desktop - DT03</span>
<span class="t" style="left:587.60px;top:716.00px;font-size:15.4px;color:#0e0e0e;transform:scaleX(0.9897);transform-origin:0 0;-webkit-text-stroke:0.3px #0e0e0e;">Sr No 234-0900-8768</span>
<span class="t" style="left:763.90px;top:716.00px;font-size:15.4px;color:#0e0e0e;letter-spacing:0.037px;-webkit-text-stroke:0.3px #0e0e0e;">10000</span>
<span class="t" style="left:844.10px;top:716.00px;font-size:15.4px;color:#0e0e0e;transform:scaleX(0.9935);transform-origin:0 0;-webkit-text-stroke:0.3px #0e0e0e;">Desktop</span>
<span class="t" style="left:992.80px;top:716.00px;font-size:15.4px;color:#0e0e0e;transform:scaleX(0.9921);transform-origin:0 0;-webkit-text-stroke:0.3px #0e0e0e;">-</span>
<span class="t" style="left:1100.10px;top:716.00px;font-size:15.4px;color:#0e0e0e;transform:scaleX(0.9869);transform-origin:0 0;-webkit-text-stroke:0.3px #0e0e0e;">28-01-2022</span>
<span class="t" style="left:1223.40px;top:716.00px;font-size:15.4px;color:#0e0e0e;transform:scaleX(0.9818);transform-origin:0 0;-webkit-text-stroke:0.3px #0e0e0e;clip-path:inset(-6px calc(100% - 140.1px) -6px 0);">i3 - 8gb - 256ssd - 1tb</span>
<span class="t" style="left:533.00px;top:756.10px;font-size:14.6px;color:#333;transform:scaleX(0.9764);transform-origin:0 0;-webkit-text-stroke:0.3px #333;">GrossBlock | Version</span>
<span class="t" style="left:670.00px;top:756.10px;font-size:14.6px;color:#7014bd;transform:scaleX(0.9575);transform-origin:0 0;-webkit-text-stroke:0.3px #7014bd;">1.16</span>
<span class="t" style="left:701.50px;top:756.10px;font-size:14.6px;color:#333;transform:scaleX(0.9762);transform-origin:0 0;-webkit-text-stroke:0.3px #333;">Date 27-01-2022 | © Tech Ideas 2022 | Marketed By :</span>
<span class="t" style="left:1042.80px;top:756.10px;font-size:14.6px;color:#7014bd;transform:scaleX(0.9838);transform-origin:0 0;-webkit-text-stroke:0.3px #7014bd;">Systech Softwares</span>
<svg style="left:0;top:0" width="1432" height="784" viewBox="0 0 1432 784"><rect x="0" y="782.4" width="1432" height="1.6" fill="url(#bg1)"/><defs><linearGradient id="bg1" x1="0" x2="1"><stop offset="0" stop-color="#120629"/><stop offset=".8" stop-color="#150730"/><stop offset=".99" stop-color="#3f0a8a"/></linearGradient></defs><path d="M1432 772.4V784H1422V782.4A10 10 0 0 0 1432 772.4Z" fill="#430b90"/><path d="M1432 0V3A3 3 0 0 0 1429 0Z" fill="#3a3550"/></svg>
</div>
</body>
</html>
